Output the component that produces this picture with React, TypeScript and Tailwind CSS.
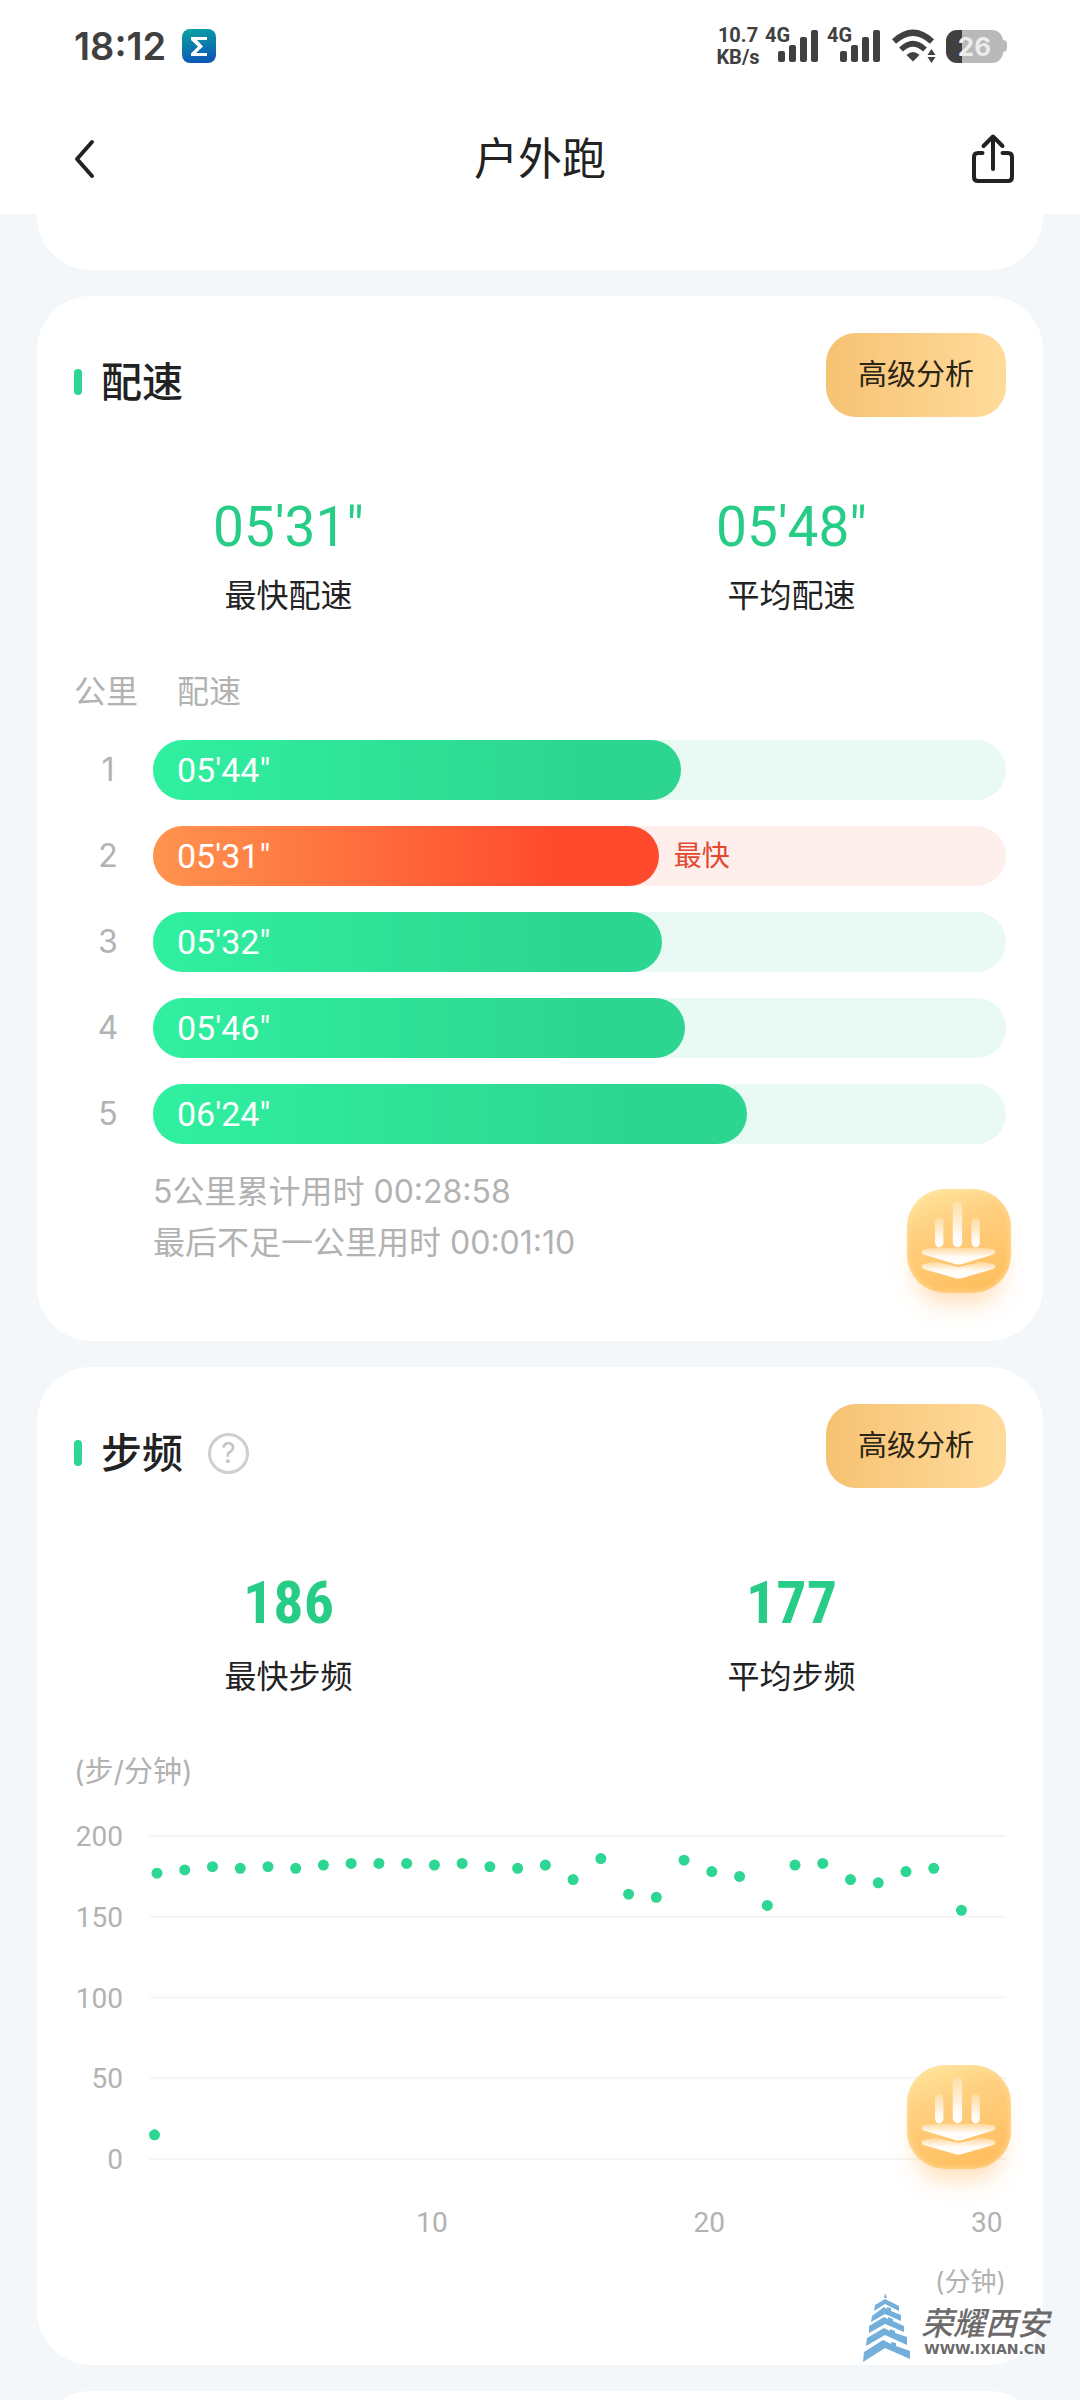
import { useId } from "react";

type Split = { km: number; pace: string; width: number; fastest?: boolean };

const splits: Split[] = [
  { km: 1, pace: "05'44\"", width: 61.9 },
  { km: 2, pace: "05'31\"", width: 59.3, fastest: true },
  { km: 3, pace: "05'32\"", width: 59.7 },
  { km: 4, pace: "05'46\"", width: 62.4 },
  { km: 5, pace: "06'24\"", width: 69.6 },
];

const cadence = [
  177, 179, 181, 180, 181, 180, 182, 183, 183, 183, 182, 183, 181, 180, 182,
  173, 186, 164, 162, 185, 178, 175, 157, 182, 183, 173, 171, 178, 180, 154,
];

function Signal() {
  return (
    <div className="flex items-start">
      <span className="w-[27px] font-['Roboto',sans-serif] text-[20px] leading-[12px] font-bold">4G</span>
      <svg className="-ml-[14px] h-[34px] w-[42px]" viewBox="0 0 42 34" fill="currentColor" aria-hidden="true">
        <rect x="0" y="22" width="7" height="11" rx="2" />
        <rect x="11" y="16" width="7" height="17" rx="2" />
        <rect x="22" y="8" width="7" height="25" rx="2" />
        <rect x="33" y="1" width="7" height="32" rx="2" />
      </svg>
    </div>
  );
}

function StatusBar() {
  return (
    <div className="flex h-[92px] items-center justify-between pr-[73px] pl-[74px] text-[#404040]">
      <div className="flex items-center gap-4">
        <span className="text-[38px] leading-[44px] font-semibold">18:12</span>
        <svg className="size-[34px]" viewBox="0 0 34 34" aria-hidden="true">
          <defs>
            <linearGradient id="app-badge" x1="0" y1="0" x2="0.2" y2="1">
              <stop offset="0" stopColor="#0ba5a2" />
              <stop offset="1" stopColor="#0b59b4" />
            </linearGradient>
          </defs>
          <rect width="34" height="34" rx="8" fill="url(#app-badge)" />
          <path d="M9 8H25V11H15L21 17.5L14 24H25V27H9V24.5L16 17.5L9 11Z" fill="#fff" />
        </svg>
      </div>
      <div className="flex items-center">
        <div className="flex w-[44px] flex-col items-center font-['Roboto',sans-serif] text-[20px] leading-[22px] font-bold">
          <span>10.7</span>
          <span>KB/s</span>
        </div>
        <div className="ml-[5px] flex gap-[7px]">
          <Signal />
          <Signal />
        </div>
        <svg className="ml-[10px] h-[34px] w-[46px]" viewBox="0 0 46 34" aria-hidden="true">
          <path d="M2 12.500Q21 -5 40 12.500" fill="none" stroke="currentColor" strokeWidth="6" />
          <path d="M9 20.500Q21 9 33 20.500" fill="none" stroke="currentColor" strokeWidth="5.500" />
          <path d="M14.500 26Q21 20 27.500 26L21 32.500Z" fill="currentColor" />
          <path d="M35.500 26L39.500 20L43.500 26ZM35.500 28L39.500 34L43.500 28Z" fill="currentColor" />
        </svg>
        <div className="ml-[8px] flex items-center">
          <div className="flex h-[33px] w-[57px] items-center justify-center rounded-[11px] bg-[linear-gradient(90deg,#404040_16px,#b9b9b9_16px)] text-[26px] leading-[33px] font-bold text-[#ececec]">
            26
          </div>
          <div className="h-[12px] w-[4px] rounded-r-[4px] bg-[#b9b9b9]" />
        </div>
      </div>
    </div>
  );
}

function Header() {
  return (
    <header className="bg-white">
      <StatusBar />
      <div className="flex h-[122px] items-center justify-between px-[64px] pt-[12px]">
        <button type="button" aria-label="返回" className="w-[46px] pl-[6px]">
          <svg className="h-[42px] w-[28px]" viewBox="0 0 28 42" fill="none" stroke="#222" strokeWidth="4" strokeLinecap="round" strokeLinejoin="round" aria-hidden="true">
            <path d="M22 4L7 21L22 38" />
          </svg>
        </button>
        <h1 className="text-[44px] leading-[60px] text-[#222]">户外跑</h1>
        <button type="button" aria-label="分享">
          <svg className="h-[52px] w-[46px]" viewBox="0 0 46 52" fill="none" stroke="#222" strokeWidth="4" strokeLinecap="round" strokeLinejoin="round" aria-hidden="true">
            <path d="M12.500 20H8Q4 20 4 24V44Q4 48 8 48H38Q42 48 42 44V24Q42 20 38 20H32.500" />
            <path d="M23 36V4M13.500 13L23 3.500L32.500 13" />
          </svg>
        </button>
      </div>
    </header>
  );
}

function CardTitle({ title, help }: { title: string; help?: boolean }) {
  return (
    <div className="flex h-[84px] items-center justify-between px-[37px]">
      <div className="flex items-center pt-[14px]">
        <span className="h-[26px] w-[8px] rounded-full bg-[#2dd692]" />
        <h2 className="ml-[19px] text-[41px] leading-[56px] font-medium text-[#222]">{title}</h2>
        {help && (
          <button
            type="button"
            aria-label="步频说明"
            className="ml-[25px] flex size-[41px] items-center justify-center rounded-full border-3 border-[#cfcfcf] text-[28px] leading-none text-[#c4c4c4]"
          >
            ?
          </button>
        )}
      </div>
      <button
        type="button"
        className="h-[84px] rounded-[30px] bg-linear-to-r from-[#f6c272] to-[#ffdb9b] px-[32px] text-[29px] leading-[40px] text-[#2b2417]"
      >
        高级分析
      </button>
    </div>
  );
}

function Stat({ value, label, narrow }: { value: string; label: string; narrow?: boolean }) {
  return (
    <div className="flex flex-col items-center gap-[15px]">
      <span
        className={
          narrow
            ? "font-['Roboto_Condensed','Liberation_Sans_Narrow','Roboto',sans-serif] text-[60px] leading-[70px] font-bold text-[#27cd87]"
            : "font-['Roboto',sans-serif] text-[55px] leading-[60px] text-[#27cd87]"
        }
      >
        {value}
      </span>
      <span className="text-[32px] leading-[48px] text-[#222]">{label}</span>
    </div>
  );
}

function AnalysisButton({ place }: { place: string }) {
  const id = useId().replace(/[^a-zA-Z0-9]/g, "");
  return (
    <button
      type="button"
      aria-label="查看分析"
      className={`absolute right-[32px] size-[104px] rounded-[38px] bg-[linear-gradient(160deg,#ffe89f_0%,#ffcf80_35%,#ffbb58_100%)] shadow-[inset_0_0_5px_2px_rgba(255,232,170,0.5),0_20px_24px_-10px_rgba(255,180,90,0.45)] ${place}`}
    >
      <svg className="size-full" viewBox="0 0 100 100" aria-hidden="true">
        <defs>
          <linearGradient id={`${id}b`} x1="0" y1="0" x2="0" y2="1">
            <stop offset="0" stopColor="#fff" stopOpacity="0.25" />
            <stop offset="0.75" stopColor="#fff" stopOpacity="0.95" />
            <stop offset="1" stopColor="#fff" />
          </linearGradient>
          <linearGradient id={`${id}c`} x1="0" y1="0" x2="0" y2="1">
            <stop offset="0" stopColor="#fff" stopOpacity="0.3" />
            <stop offset="0.55" stopColor="#fff" stopOpacity="0.95" />
            <stop offset="1" stopColor="#fff" />
          </linearGradient>
        </defs>
        <g fill={`url(#${id}b)`}>
          <rect x="27" y="28" width="8" height="28" rx="4" />
          <rect x="44" y="12" width="9" height="44" rx="4.500" />
          <rect x="62" y="28" width="8" height="28" rx="4" />
        </g>
        <g fill={`url(#${id}c)`}>
          <path d="M16 77Q12 74.500 16 72L28 70L49.500 75L71 70L83 72Q87 74.500 83 77L53 85.500Q49.500 86.500 46 85.500Z" />
          <path d="M16 63Q12 60.500 16 58L28 56.500H71L83 58Q87 60.500 83 63L53 72Q49.500 73 46 72Z" />
        </g>
      </svg>
    </button>
  );
}

function PaceTable() {
  return (
    <table className="w-full border-collapse">
      <thead>
        <tr className="text-[32px] leading-[48px] text-[#b2b2b2]">
          <th scope="col" className="w-[79px] pb-[11px] text-left font-normal">
            公里
          </th>
          <th scope="col" className="pb-[11px] pl-[24px] text-left font-normal">
            配速
          </th>
        </tr>
      </thead>
      <tbody>
        {splits.map((s) => (
          <tr key={s.km}>
            <td className="py-[13px] pr-[11px] text-center text-[32px] leading-[60px] text-[#b2b2b2]">{s.km}</td>
            <td className="py-[13px]">
              <div className={s.fastest ? "flex items-center rounded-full bg-[#feefed]" : "flex items-center rounded-full bg-[#e8faf3]"}>
                <div
                  className={
                    s.fastest
                      ? "rounded-full bg-[linear-gradient(90deg,#ff944f,#ff4a2d_80%)] pl-[24px] font-['Roboto',sans-serif] text-[34px] leading-[60px] text-white"
                      : "rounded-full bg-[linear-gradient(90deg,#30f0a0,#2dd690_80%)] pl-[24px] font-['Roboto',sans-serif] text-[34px] leading-[60px] text-white"
                  }
                  style={{ width: `${s.width}%` }}
                >
                  {s.pace}
                </div>
                {s.fastest && <span className="ml-[15px] text-[28px] leading-[40px] text-[#e2492f]">最快</span>}
              </div>
            </td>
          </tr>
        ))}
      </tbody>
    </table>
  );
}

function CadenceChart() {
  const y = (v: number) => 367 - v * 1.615;
  return (
    <svg
      className="block h-auto w-full overflow-visible font-['Roboto',sans-serif]"
      viewBox="0 0 932 458"
      role="img"
      aria-label="步频"
    >
      {[200, 150, 100, 50, 0].map((v) => (
        <g key={v}>
          <line x1="76" x2="932" y1={y(v)} y2={y(v)} stroke="#f5f5f5" strokeWidth="2" />
          <text x="49" y={y(v) + 10} textAnchor="end" className="fill-[#b2b2b2] text-[28px]">
            {v}
          </text>
        </g>
      ))}
      {[10, 20, 30].map((m) => (
        <text key={m} x={80.5 + m * 27.74} y="440" textAnchor="middle" className="fill-[#b2b2b2] text-[28px]">
          {m}
        </text>
      ))}
      <circle cx="80.500" cy={y(15)} r="5.500" fill="#2dd692" />
      {cadence.map((v, i) => (
        <circle key={i} cx={83 + i * 27.74} cy={y(v)} r="5.500" fill="#2dd692" />
      ))}
    </svg>
  );
}

function Watermark() {
  return (
    <div className="absolute right-[-6px] bottom-[3px] flex items-center gap-[10px] text-[#6c6a6b]">
      <svg className="h-[70px] w-[48px]" viewBox="0 0 48 70" fill="#74aeda" aria-hidden="true">
        <path d="M22 1L24 6H21Z" />
        <path d="M12 13L22 7L36 14V19L22 12L11 19Z" />
        <path d="M9 24L21 15L24 17V15L28 16V19L38 23V29L22 22L8 30Z" />
        <path d="M6 34L21 25L25 27V25L30 27V29L41 34V40L22 32L6 41Z" />
        <path d="M4 46L21 36L27 39V37L32 39V41L44 45V53L22 43L3 54Z" />
        <path d="M1 60L20 48L28 52V50L33 51V54L47 59V67L22 56L0 70Z" />
      </svg>
      <div className="flex flex-col items-center pt-[10px]">
        <span className="text-[32px] leading-[34px] font-medium italic">荣耀西安</span>
        <span className="font-['DejaVu_Sans',sans-serif] text-[14px] leading-[16px] font-bold">WWW.IXIAN.CN</span>
      </div>
    </div>
  );
}

export default function App() {
  return (
    <div className="flex min-h-screen flex-col bg-[#f3f7fa] font-['Inter','Noto_Sans_CJK_SC',sans-serif]">
      <Header />
      <main className="flex flex-1 flex-col gap-[26px] px-[37px]">
        <div className="h-[56px] rounded-b-[54px] bg-white" />

        <section className="relative rounded-[54px] bg-white pt-[37px] pb-[73px]">
          <CardTitle title="配速" />
          <div className="mt-[80px] grid grid-cols-2">
            <Stat value={"05'31\""} label="最快配速" />
            <Stat value={"05'48\""} label="平均配速" />
          </div>
          <div className="mt-[48px] px-[37px]">
            <PaceTable />
            <div className="mt-[9px] pl-[79px] text-[32px] leading-[51px] text-[#b2b2b2]">
              <p>5公里累计用时 00:28:58</p>
              <p>最后不足一公里用时 00:01:10</p>
            </div>
          </div>
          <AnalysisButton place="bottom-[48px]" />
        </section>

        <section className="relative rounded-[54px] bg-white pt-[37px] pb-[63px]">
          <CardTitle title="步频" help />
          <div className="mt-[80px] grid grid-cols-2">
            <Stat value="186" label="最快步频" narrow />
            <Stat value="177" label="平均步频" narrow />
          </div>
          <div className="mt-[51px] px-[37px] text-[#b2b2b2]">
            <p className="text-[29px] leading-[40px]">(步/分钟)</p>
            <CadenceChart />
            <p className="mt-[12px] text-right text-[26px] leading-[40px]">(分钟)</p>
          </div>
          <AnalysisButton place="bottom-[196px]" />
          <Watermark />
        </section>

        <div className="relative min-h-[9px] flex-1 overflow-hidden">
          <div className="absolute inset-x-0 top-0 h-[108px] rounded-t-[54px] bg-white" />
        </div>
      </main>
    </div>
  );
}
